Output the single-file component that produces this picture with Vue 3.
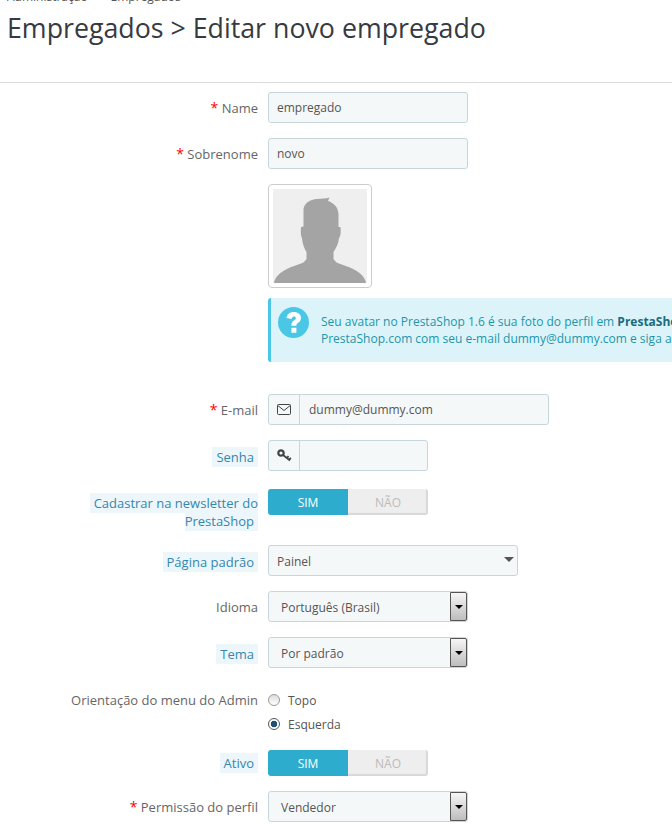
<template>
  <div class="page">
    <header class="page-head">
      <div class="breadcrumb">
        <span>Administração</span>
        <span class="crumb-sep">&gt;</span>
        <span>Empregados</span>
      </div>
      <h1>Empregados &gt; Editar novo empregado</h1>
    </header>

    <form class="form" @submit.prevent>
      <div class="row">
        <label class="label"><span class="req">*</span> Name</label>
        <input class="input w200" type="text" value="empregado" />
      </div>

      <div class="row">
        <label class="label"><span class="req">*</span> Sobrenome</label>
        <input class="input w200" type="text" value="novo" />
      </div>

      <div class="row avatar-row">
        <div class="label"></div>
        <div class="thumb">
          <svg width="94" height="94" viewBox="0 0 94 94">
            <rect width="94" height="94" fill="#efefef" />
            <path
              d="M1 94 C2 87 9 82 16 79 C22 76.500 28 75 31 73 L33.500 70 L33.500 63 C31 59 29.500 55 29 49 C28 48 27.500 44 28 38 L30.500 37.500 L30.500 20 C31.500 14 37 10.500 44 10 C49 9.800 53 9.500 56.500 8.500 L55 12 C61 14 65 18 65.500 25 L65.500 38 L67.500 38 C68 44 67.500 48 66 49 C65.500 55 63 59 60.500 63 L60.500 70 L63 73 C66 75 72 76.500 78 79 C85 82 92 87 93 94 Z"
              fill="#a4a4a4"
            />
          </svg>
        </div>
      </div>

      <div class="alert">
        <svg class="alert-icon" width="31" height="31" viewBox="0 0 31 31">
          <circle cx="15.500" cy="15.500" r="15.500" fill="#4ac7e5" />
          <path
            d="M8.500 11 C9 7 12 5 15.800 5 C20 5 23 7.500 23 11 C23 13.800 21.300 15 19.800 16 C18.800 16.700 18.400 17.200 18.400 18.800 L13.400 18.800 C13.400 16 14.200 14.600 15.800 13.500 C17.200 12.600 17.900 12.100 17.900 11.200 C17.900 10.200 17.100 9.600 16 9.600 C14.800 9.600 13.900 10.400 13.600 12 Z M13.400 20.800 L18.400 20.800 L18.400 25.800 L13.400 25.800 Z"
            fill="#fff"
          />
        </svg>
        <p>
          Seu avatar no PrestaShop 1.6 é sua foto do perfil em <strong>PrestaShop.com</strong>. Para alterá-la, acesse<br />
          PrestaShop.com com seu e-mail dummy@dummy.com e siga as instruções.
        </p>
      </div>

      <div class="row">
        <label class="label"><span class="req">*</span> E-mail</label>
        <div class="group w281">
          <span class="addon">
            <svg width="14" height="11" viewBox="0 0 14 11" fill="none" stroke="#444" stroke-width="1">
              <rect x="0.500" y="0.500" width="13" height="10" rx="1" />
              <path d="M0.800 1.500 L7 6.500 L13.200 1.500" />
            </svg>
          </span>
          <input class="group-input" type="text" value="dummy@dummy.com" />
        </div>
      </div>

      <div class="row hint-row">
        <label class="label"><span class="hint">Senha</span></label>
        <div class="group w160">
          <span class="addon">
            <svg width="15" height="13" viewBox="0 0 15 13" fill="none" stroke="#444">
              <circle cx="4" cy="4" r="2.700" stroke-width="2.200" />
              <path d="M6 6 L13 11.500 M10 9 L11.500 7 M12 10.500 L14 9" stroke-width="1.800" />
            </svg>
          </span>
          <input class="group-input" type="text" />
        </div>
      </div>

      <div class="row switch-row newsletter">
        <label class="label"><span class="hint">Cadastrar na newsletter do PrestaShop</span></label>
        <div class="switch">
          <span class="on">SIM</span>
          <span class="off">NÃO</span>
        </div>
      </div>

      <div class="row hint-row">
        <label class="label"><span class="hint">Página padrão</span></label>
        <div class="fake-select w250">
          <span class="value">Painel</span>
          <i class="caret"></i>
        </div>
      </div>

      <div class="row">
        <label class="label">Idioma</label>
        <div class="native w200">
          <span class="value">Português (Brasil)</span>
          <b class="arrow"><i></i></b>
        </div>
      </div>

      <div class="row hint-row">
        <label class="label"><span class="hint">Tema</span></label>
        <div class="native w200">
          <span class="value">Por padrão</span>
          <b class="arrow"><i></i></b>
        </div>
      </div>

      <div class="row radios-row">
        <label class="label">Orientação do menu do Admin</label>
        <div class="radios">
          <div class="radio-item"><span class="radio"></span>Topo</div>
          <div class="radio-item"><span class="radio checked"></span>Esquerda</div>
        </div>
      </div>

      <div class="row switch-row">
        <label class="label"><span class="hint">Ativo</span></label>
        <div class="switch">
          <span class="on">SIM</span>
          <span class="off">NÃO</span>
        </div>
      </div>

      <div class="row">
        <label class="label"><span class="req">*</span> Permissão do perfil</label>
        <div class="native w200">
          <span class="value">Vendedor</span>
          <b class="arrow"><i></i></b>
        </div>
      </div>
    </form>
  </div>
</template>

<script setup>
</script>

<style>
html,
body {
  margin: 0;
  background: #fff;
  overflow: hidden;
}
</style>

<style scoped>
.page {
  width: 672px;
  height: 824px;
  overflow: hidden;
  font-family: "Open Sans", sans-serif;
  font-size: 12px;
  color: #555;
}

.page-head {
  height: 82px;
  border-bottom: 1px solid #ddd;
  padding-left: 7px;
}

.breadcrumb {
  height: 5px;
  display: flex;
  align-items: flex-end;
  gap: 8px;
  overflow: hidden;
  color: #555;
  font-size: 12px;
  line-height: 16px;
}

.crumb-sep {
  color: #a0c878;
}

h1 {
  margin: 3px 0 0;
  font-size: 26.75px;
  font-weight: 400;
  line-height: 40px;
  color: #363a41;
}

.form {
  padding-top: 9px;
  display: flex;
  flex-direction: column;
  gap: 15px;
}

.row {
  display: flex;
  gap: 10px;
  align-items: flex-start;
}

.label {
  width: 258px;
  flex: none;
  text-align: right;
  line-height: 18px;
  padding-top: 7px;
  font-size: 13px;
  color: #666;
  box-sizing: border-box;
}

.hint-row .label {
  padding-top: 8px;
}

.req {
  color: #f00;
  font-size: 14px;
  line-height: 10px;
}

.hint {
  background: #edf7fb;
  color: #3586ae;
  padding: 1px 4px;
}

.w200 { width: 200px; }
.w160 { width: 160px; }
.w250 { width: 250px; }
.w281 { width: 281px; }

.input,
.group,
.fake-select,
.native {
  height: 31px;
  box-sizing: border-box;
  background: #f5f8f9;
  border: 1px solid #c7d6db;
  border-radius: 3px;
  font-family: inherit;
  font-size: 12px;
  color: #555;
}

.input {
  padding: 0 8px;
  outline: none;
}

.value {
  padding-top: 2px;
}

.avatar-row .label {
  padding: 0;
}

.thumb {
  width: 104px;
  height: 104px;
  box-sizing: border-box;
  border: 1px solid #ccc;
  border-radius: 4px;
  padding: 4px;
  display: flex;
}

.alert {
  margin: -5px 0 17px 268px;
  width: 560px;
  height: 64px;
  box-sizing: border-box;
  display: flex;
  gap: 12px;
  padding: 9px 0 0 7px;
  background: #dcf4f9;
  border-left: 3px solid #4ac7e5;
  border-radius: 3px;
  color: #1e94ab;
  font-size: 12px;
  line-height: 17px;
  white-space: nowrap;
}

.alert-icon {
  flex: none;
}

.alert p {
  margin: 6px 0 0;
}

.alert strong {
  color: #1b6b80;
}

.group {
  display: flex;
}

.addon {
  width: 30px;
  flex: none;
  display: flex;
  align-items: center;
  justify-content: center;
  border-right: 1px solid #c7d6db;
}

.group-input {
  flex: 1;
  min-width: 0;
  border: 0;
  outline: none;
  background: transparent;
  padding: 0 9px;
  font-family: inherit;
  font-size: 12px;
  color: #555;
}

.switch-row {
  padding-top: 3px;
}

.switch-row .label {
  padding-top: 4px;
}

.newsletter .label {
  padding-top: 5px;
  padding-left: 89px;
}

.switch {
  width: 160px;
  height: 26px;
  flex: none;
  display: flex;
  border-radius: 3px;
  overflow: hidden;
  text-align: center;
  font-size: 12px;
  line-height: 27px;
}

.on {
  width: 80px;
  background: #2eacce;
  color: #fff;
}

.off {
  width: 80px;
  background: #eee;
  color: #bbb;
  box-shadow: inset -2px -2px 1px #d8d8d8;
}

.fake-select {
  display: flex;
  align-items: center;
  justify-content: space-between;
  padding: 0 3px 0 8px;
}

.caret {
  width: 0;
  height: 0;
  margin-top: -3px;
  border-left: 5px solid transparent;
  border-right: 5px solid transparent;
  border-top: 5px solid #555;
}

.native {
  display: flex;
  align-items: center;
  justify-content: space-between;
  padding-left: 12px;
}

.arrow {
  width: 17px;
  height: 29px;
  box-sizing: border-box;
  border: 1px solid #555;
  border-radius: 0 2px 2px 0;
  background: linear-gradient(#f6f6f6, #bdbdbd);
  display: flex;
  align-items: center;
  justify-content: center;
}

.arrow i {
  width: 0;
  height: 0;
  border-left: 4px solid transparent;
  border-right: 4px solid transparent;
  border-top: 4px solid #000;
}

.radios-row {
  padding-top: 7px;
  margin-bottom: -2px;
}

.radios-row .label {
  padding-top: 1px;
}

.radios {
  display: flex;
  flex-direction: column;
  gap: 4px;
}

.radio-item {
  height: 20px;
  display: flex;
  align-items: center;
  gap: 8px;
  font-size: 12px;
  color: #555;
}

.radio {
  width: 12px;
  height: 12px;
  box-sizing: border-box;
  border: 1px solid #999;
  border-radius: 50%;
  background: linear-gradient(#dcdcdc, #fff);
}

.radio.checked {
  background: radial-gradient(circle, #1d4f7a 0 3px, #fff 3.6px);
  border-color: #555;
}
</style>
